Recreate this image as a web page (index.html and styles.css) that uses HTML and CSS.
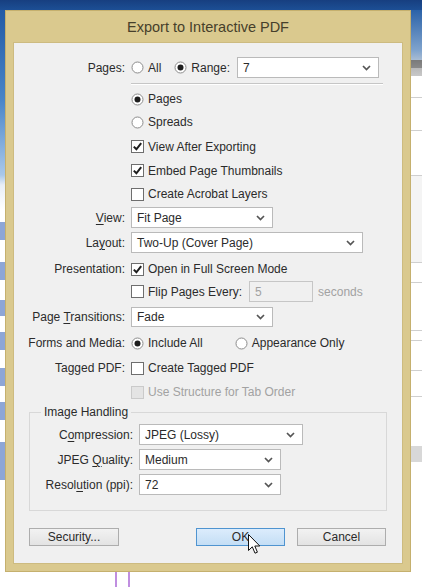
FILE: index.html
```html
<!DOCTYPE html>
<html>
<head>
<meta charset="utf-8">
<title>Export to Interactive PDF</title>
<link rel="stylesheet" href="styles.css">
</head>
<body>
<div class="desk-top"></div>
<div class="desk-left"></div>
<div class="desk-right"></div>
<div class="desk-line l1"></div>
<div class="desk-line l2"></div>

<div class="window">
  <div class="titlebar">Export to Interactive PDF</div>
  <div class="panel">
    <div class="row r-pages">
      <label class="lbl">Pages:</label>
      <div class="ctl">
        <span class="opt"><svg class="radio" viewBox="0 0 13 13"><circle cx="6.5" cy="6.5" r="5.5"/></svg>All</span>
        <span class="opt o-range"><svg class="radio" viewBox="0 0 13 13"><circle cx="6.5" cy="6.5" r="5.5"/><circle class="dot" cx="6.5" cy="6.5" r="3"/></svg>Range:</span>
        <div class="select w142 s-range"><span>7</span><svg class="chev" viewBox="0 0 9 6"><path d="M1 1 L4.5 4.5 L8 1"/></svg></div>
      </div>
    </div>
    <div class="sep"></div>
    <div class="row h22 mt3"><span></span><span class="opt"><svg class="radio" viewBox="0 0 13 13"><circle cx="6.5" cy="6.5" r="5.5"/><circle class="dot" cx="6.5" cy="6.5" r="3"/></svg>Pages</span></div>
    <div class="row h24"><span></span><span class="opt"><svg class="radio" viewBox="0 0 13 13"><circle cx="6.5" cy="6.5" r="5.5"/></svg>Spreads</span></div>
    <div class="row h25"><span></span><span class="opt"><svg class="check" viewBox="0 0 13 13"><rect x="0.5" y="0.5" width="12" height="12"/><path d="M2.8 6.6 L5.4 9.3 L10.2 3.2"/></svg>View After Exporting</span></div>
    <div class="row h23"><span></span><span class="opt"><svg class="check" viewBox="0 0 13 13"><rect x="0.5" y="0.5" width="12" height="12"/><path d="M2.8 6.6 L5.4 9.3 L10.2 3.2"/></svg>Embed Page Thumbnails</span></div>
    <div class="row h24"><span></span><span class="opt"><svg class="check" viewBox="0 0 13 13"><rect x="0.5" y="0.5" width="12" height="12"/></svg>Create Acrobat Layers</span></div>
    <div class="row h21 mt1">
      <label class="lbl"><u>V</u>iew:</label>
      <div class="select w142"><span>Fit Page</span><svg class="chev" viewBox="0 0 9 6"><path d="M1 1 L4.5 4.5 L8 1"/></svg></div>
    </div>
    <div class="row h21 mt4">
      <label class="lbl">La<u>y</u>out:</label>
      <div class="select w232"><span>Two-Up (Cover Page)</span><svg class="chev" viewBox="0 0 9 6"><path d="M1 1 L4.5 4.5 L8 1"/></svg></div>
    </div>
    <div class="row h24 mt4">
      <label class="lbl">Presentation:</label>
      <span class="opt"><svg class="check" viewBox="0 0 13 13"><rect x="0.5" y="0.5" width="12" height="12"/><path d="M2.8 6.6 L5.4 9.3 L10.2 3.2"/></svg>Open in Full Screen Mode</span>
    </div>
    <div class="row h21">
      <span></span>
      <div class="ctl">
        <span class="opt"><svg class="check" viewBox="0 0 13 13"><rect x="0.5" y="0.5" width="12" height="12"/></svg>Flip Pages Every:</span>
        <div class="field dis">5</div>
        <span class="dimtext">seconds</span>
      </div>
    </div>
    <div class="row h20 mt5">
      <label class="lbl">Page <u>T</u>ransitions:</label>
      <div class="select w142 h20s"><span>Fade</span><svg class="chev" viewBox="0 0 9 6"><path d="M1 1 L4.5 4.5 L8 1"/></svg></div>
    </div>
    <div class="row h24 mt4">
      <label class="lbl">Forms and Media:</label>
      <div class="ctl">
        <span class="opt"><svg class="radio" viewBox="0 0 13 13"><circle cx="6.5" cy="6.5" r="5.5"/><circle class="dot" cx="6.5" cy="6.5" r="3"/></svg>Include All</span>
        <span class="opt o-app"><svg class="radio" viewBox="0 0 13 13"><circle cx="6.5" cy="6.5" r="5.5"/></svg>Appearance Only</span>
      </div>
    </div>
    <div class="row h26">
      <label class="lbl">Tagged PDF:</label>
      <span class="opt"><svg class="check" viewBox="0 0 13 13"><rect x="0.5" y="0.5" width="12" height="12"/></svg>Create Tagged PDF</span>
    </div>
    <div class="row h22">
      <span></span>
      <span class="opt dimtext"><svg class="check dis" viewBox="0 0 13 13"><rect x="0.5" y="0.5" width="12" height="12"/></svg>Use Structure for Tab Order</span>
    </div>

    <div class="group">
      <span class="legend">Image Handling</span>
      <div class="grow">
        <label class="lbl">C<u>o</u>mpression:</label>
        <div class="select w164"><span>JPEG (Lossy)</span><svg class="chev" viewBox="0 0 9 6"><path d="M1 1 L4.5 4.5 L8 1"/></svg></div>
      </div>
      <div class="grow">
        <label class="lbl">JPEG <u>Q</u>uality:</label>
        <div class="select w142"><span>Medium</span><svg class="chev" viewBox="0 0 9 6"><path d="M1 1 L4.5 4.5 L8 1"/></svg></div>
      </div>
      <div class="grow">
        <label class="lbl">Resol<u>u</u>tion (ppi):</label>
        <div class="select w142"><span>72</span><svg class="chev" viewBox="0 0 9 6"><path d="M1 1 L4.5 4.5 L8 1"/></svg></div>
      </div>
    </div>

    <div class="buttons">
      <div class="btn">Security...</div>
      <div class="btn ok">OK</div>
      <div class="btn">Cancel</div>
    </div>
  </div>
</div>

<svg class="cursor" viewBox="0 0 13 21" width="13" height="21"><path d="M0.5 0.5 L0.5 16.5 L4.3 12.8 L7 19.2 L9.4 18.2 L6.8 12 L11.8 12 Z"/></svg>
</body>
</html>
```

FILE: styles.css
```css
* { box-sizing: border-box; }
html, body { margin: 0; padding: 0; }
body {
  width: 422px;
  height: 587px;
  overflow: hidden;
  position: relative;
  background: #ffffff;
  font-family: "Liberation Sans", Arial, sans-serif;
  font-size: 12px;
  color: #2b2b2b;
}

/* desktop behind the dialog */
.desk-top {
  position: absolute; left: 0; top: 0; width: 422px; height: 12px;
  background: linear-gradient(#173f80, #1e5299);
}
.desk-left {
  position: absolute; left: 0; top: 10px; width: 6px; height: 470px;
  background: linear-gradient(#225aa5 0, #4a85c8 90px, #a9c8ea 165px, #e8eef6 175px, #ffffff 200px,
    #ffffff 212px, #8ea6d6 212px, #8ea6d6 230px, #ffffff 230px,
    #ffffff 252px, #8ea6d6 252px, #8ea6d6 270px, #ffffff 270px,
    #ffffff 290px, #8ea6d6 290px, #8ea6d6 306px, #ffffff 306px,
    #ffffff 322px, #8ea6d6 322px, #8ea6d6 340px, #ffffff 340px,
    #ffffff 358px, #8ea6d6 358px, #8ea6d6 376px, #ffffff 376px,
    #ffffff 392px, #8ea6d6 392px, #8ea6d6 410px, #ffffff 410px,
    #ffffff 432px, #8ea6d6 432px, #8ea6d6 470px);
}
.desk-right {
  position: absolute; left: 410px; top: 10px; width: 12px; height: 562px;
  background: linear-gradient(#2b62a8 0, #7fa3cd 40px, #a9bdd4 50px, #7a7a7a 50px, #8a8a8a 58px, #b9b9b9 58px, #c8c8c8 66px, #ffffff 66px,
    #ffffff 87px, #cfcfcf 87px, #cfcfcf 88px, #ffffff 88px,
    #ffffff 120px, #cfcfcf 120px, #cfcfcf 121px, #ffffff 121px,
    #ffffff 165px, #cfcfcf 165px, #cfcfcf 166px, #f4f4f4 166px,
    #f4f4f4 252px, #cfcfcf 252px, #cfcfcf 253px, #ffffff 253px,
    #ffffff 272px, #cfcfcf 272px, #cfcfcf 273px, #ffffff 273px,
    #ffffff 320px, #cfcfcf 320px, #cfcfcf 321px, #ffffff 321px,
    #ffffff 330px, #cfcfcf 330px, #cfcfcf 331px, #ffffff 331px,
    #ffffff 360px, #cfcfcf 360px, #cfcfcf 361px, #ffffff 361px,
    #ffffff 386px, #cfcfcf 386px, #cfcfcf 387px, #ffffff 387px,
    #ffffff 436px, #d8d8d8 436px, #d8d8d8 452px, #ffffff 452px);
}
.desk-line {
  position: absolute; top: 570px; width: 2px; height: 17px; background: #c08ee0;
}
.desk-line.l1 { left: 115px; }
.desk-line.l2 { left: 128px; }

/* dialog window */
.window {
  position: absolute; left: 5px; top: 10px;
  width: 406px; height: 562px;
  background: #dac98e;
  border: 1px solid #c5b06e;
}
.titlebar {
  height: 31px;
  display: flex; align-items: center; justify-content: center;
  font-size: 14.5px;
  color: #463f2b;
  padding-top: 1px;
}
.panel {
  margin: 0 7px;
  height: 522px;
  background: #f0f0f0;
  box-shadow: inset 0 0 0 1px #cdbb80;
  display: flex; flex-direction: column;
  overflow: hidden;
}

/* rows */
.row {
  display: grid;
  grid-template-columns: 112px 1fr;
  column-gap: 6px;
  align-items: center;
}
.r-pages { margin-top: 15px; height: 21px; }
.h20 { height: 20px; }
.h21 { height: 21px; }
.h22 { height: 22px; }
.h23 { height: 23px; }
.h24 { height: 24px; }
.h25 { height: 25px; }
.h26 { height: 26px; }
.mt1 { margin-top: 1px; }
.mt3 { margin-top: 3px; }
.mt4 { margin-top: 4px; }
.mt5 { margin-top: 5px; }

.lbl { text-align: right; white-space: nowrap; }
.lbl u { text-decoration-thickness: 1px; text-underline-offset: 2px; }
.ctl { display: flex; align-items: center; }

.sep {
  margin: 5px 0 0 118px;
  width: 252px;
  height: 2px;
  border-top: 1px solid #c6c6c6;
  border-bottom: 1px solid #ffffff;
}

.opt { display: inline-flex; align-items: center; gap: 4px; white-space: nowrap; }
.o-range { margin-left: 13px; }
.o-app { margin-left: 32px; }
.s-range { margin-left: 7px; }

.radio, .check { width: 13px; height: 13px; flex: none; }
.radio circle { fill: #ffffff; stroke: #8c8c8c; stroke-width: 1; }
.radio circle.dot { fill: #1e1e1e; stroke: none; }
.check rect { fill: #ffffff; stroke: #6e6e6e; stroke-width: 1; }
.check path { fill: none; stroke: #1e1e1e; stroke-width: 2; }
.check.dis rect { fill: #e4e4e4; stroke: #cacaca; }
.dimtext { color: #a2a2a2; }

/* selects and fields */
.select {
  height: 21px;
  display: flex; align-items: center; justify-content: space-between;
  border: 1px solid #bababa;
  background: #ffffff;
  padding: 0 7px 0 5px;
}
.h20s { height: 20px; }
.w142 { width: 142px; }
.w164 { width: 164px; }
.w232 { width: 232px; }
.chev { width: 9px; height: 6px; }
.chev path { fill: none; stroke: #555555; stroke-width: 1.7; }

.field {
  width: 64px; height: 21px;
  margin-left: 7px;
  border: 1px solid #c6c6c6;
  padding: 3px 5px 0;
}
.field.dis { background: #f0f0f0; color: #a2a2a2; }
.ctl .dimtext { margin-left: 5px; }

/* group */
.group {
  position: relative;
  margin: 9px 0 0 16px;
  width: 358px;
  border: 1px solid #d8d8d8;
  padding: 11px 0 15px;
  display: flex; flex-direction: column; gap: 4px;
}
.legend {
  position: absolute; left: 11px; top: -8px;
  padding: 0 3px;
  background: #f0f0f0;
  line-height: 15px;
}
.grow {
  display: grid;
  grid-template-columns: 103px 1fr;
  column-gap: 6px;
  align-items: center;
  height: 21px;
}

/* buttons */
.buttons {
  display: flex;
  margin-top: 17px;
  padding: 0 17px 0 16px;
  gap: 12px;
}
.btn {
  width: 89px; height: 18px;
  display: flex; align-items: center; justify-content: center;
  border: 1px solid #adadad;
  background: linear-gradient(#f2f2f2, #e3e3e3);
  color: #2b2b2b;
}
.btn:first-child { width: 90px; margin-right: auto; }
.btn.ok {
  background: linear-gradient(#dcecfc, #c4def5);
  border-color: #4f94d0;
}

.cursor { position: absolute; left: 248px; top: 534px; }
.cursor path { fill: #ffffff; stroke: #111111; stroke-width: 1; stroke-linejoin: round; }
```
